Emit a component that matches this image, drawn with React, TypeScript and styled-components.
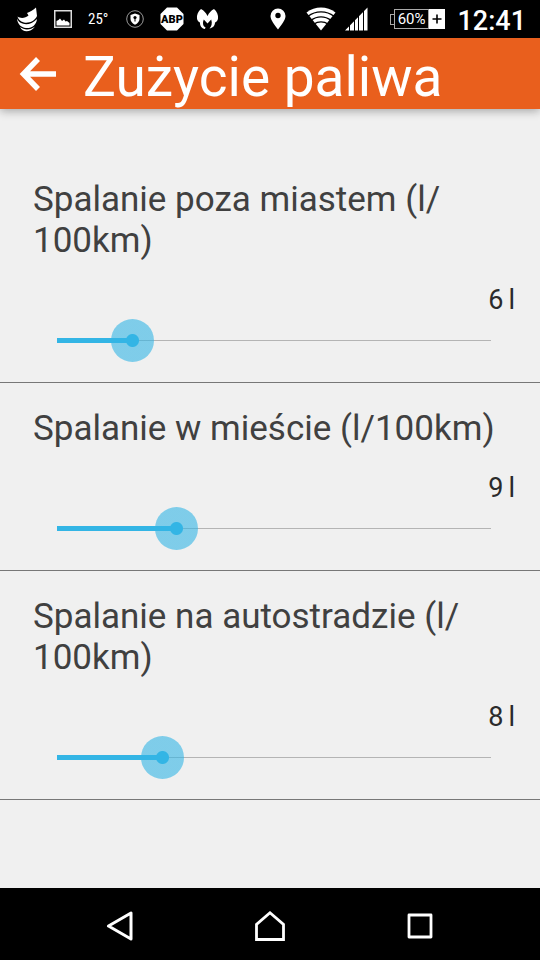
import React, { useId, useState } from "react";
import styled, { createGlobalStyle } from "styled-components";

const GlobalStyle = createGlobalStyle`
  * { box-sizing: border-box; }
  body { margin: 0; background: #f0f0f0; font-family: Roboto, sans-serif; }
`;

const Screen = styled.div`
  display: flex;
  flex-direction: column;
  min-height: 100vh;
`;

const StatusBar = styled.div`
  display: flex;
  align-items: center;
  justify-content: space-between;
  height: 38px;
  padding: 0 14px 0 16px;
  background: #000;
  color: #fff;
`;

const StatusGroup = styled.div<{ $gap: number }>`
  display: flex;
  align-items: center;
  gap: ${(p) => p.$gap}px;
  svg { display: block; }
`;

const Temperature = styled.span`
  min-width: 22px;
  font-family: "Roboto Condensed", Roboto, sans-serif;
  font-size: 15px;
  line-height: 20px;
`;

const Clock = styled.time`
  padding-top: 3px;
  font-size: 27px;
  font-weight: 500;
  line-height: 32px;
`;

const Battery = styled.div`
  display: flex;
  align-items: center;
`;

const BatteryTip = styled.span`
  width: 4px;
  height: 11px;
  border: 1px solid #aaa;
  border-right: 0;
`;

const BatteryLevel = styled.span`
  height: 20px;
  padding: 0 3px;
  border: 1px solid #aaa;
  font-size: 15px;
  line-height: 18px;
`;

const BatteryPlus = styled.span`
  display: grid;
  place-items: center;
  width: 16px;
  height: 20px;
  background: #fff;
`;

const Header = styled.header`
  display: flex;
  align-items: center;
  height: 71px;
  padding: 0 18px;
  gap: 26px;
  background: #e95f1d;
  color: #fff;
  box-shadow: 0 2px 9px rgba(0, 0, 0, 0.32);
`;

const BackButton = styled.button`
  display: flex;
  padding: 0;
  border: 0;
  background: none;
  color: inherit;
`;

const Title = styled.h1`
  margin: 0;
  padding-top: 6px;
  font-size: 55px;
  font-weight: 400;
  line-height: 66px;
`;

const Settings = styled.main`
  flex: 1;
  padding-top: 45px;
`;

const Setting = styled.section`
  padding: 25px 28px 20px 36px;
  border-bottom: 1px solid #777;
`;

const SettingLabel = styled.label`
  display: block;
  margin-left: -3px;
  color: #404040;
  font-size: 35px;
  line-height: 41px;
`;

const SettingValue = styled.output`
  display: flex;
  justify-content: flex-end;
  gap: 5px;
  margin: 23px -3px 3px 0;
  color: #2b2b2b;
  font-size: 27px;
  line-height: 32px;
`;

const Slider = styled.input`
  display: block;
  appearance: none;
  width: 100%;
  height: 43px;
  margin: 0;
  background:
    linear-gradient(#33b5e5, #33b5e5) 21px 19px / calc((100% - 43px) * var(--ratio)) 5px no-repeat,
    linear-gradient(#b4b4b4, #b4b4b4) center 21px / calc(100% - 43px) 1px no-repeat;

  &::-webkit-slider-runnable-track {
    height: 43px;
    background: transparent;
  }

  &::-webkit-slider-thumb {
    appearance: none;
    width: 43px;
    height: 43px;
    border-radius: 50%;
    background: radial-gradient(circle, #33b5e5 6px, rgba(51, 181, 229, 0.6) 7px);
  }
`;

const NavBar = styled.nav`
  display: flex;
  align-items: center;
  justify-content: center;
  gap: 106px;
  height: 72px;
  padding-top: 4px;
  background: #000;
`;

const NavButton = styled.button`
  display: grid;
  place-items: center;
  width: 44px;
  height: 44px;
  padding: 0;
  border: 0;
  background: none;
`;

const MIN = 1;
const MAX = 30;

function FuelSetting({ name, initial }: { name: string; initial: number }) {
  const id = useId();
  const [value, setValue] = useState(initial);
  const ratio = (value - MIN) / (MAX - MIN);
  return (
    <Setting>
      <SettingLabel htmlFor={id}>
        {name} (l/
        <wbr />
        100km)
      </SettingLabel>
      <SettingValue htmlFor={id}>
        <span>{value}</span> <span>l</span>
      </SettingValue>
      <Slider
        id={id}
        type="range"
        min={MIN}
        max={MAX}
        value={value}
        onChange={(e) => setValue(Number(e.target.value))}
        style={{ "--ratio": ratio } as React.CSSProperties}
      />
    </Setting>
  );
}

function SwooshIcon() {
  return (
    <svg width="22" height="25" viewBox="0 0 22 25" fill="#fff">
      <path d="M20 0.500 21 9C19 14 13 16.500 8 15.500 4 14.500 2 12 1.500 9.500 5 12 9.500 11 12.500 8.500L11 6C14 5 17.500 3 20 0.500Z" />
      <path d="M1 11.500C4 18.500 14 19.500 21 12 20.500 18 15.500 21.500 10 21 5 20.500 1.500 17 1 11.500Z" />
      <path d="M4 20C8.500 23.500 14.500 23 19 19.500 16.500 23 13.500 24.300 10.500 24.300 8 24.300 5.500 23 4 20Z" />
    </svg>
  );
}

function PictureIcon() {
  return (
    <svg width="18" height="18" viewBox="0 0 18 18">
      <rect x="0.750" y="0.750" width="16.500" height="16.500" fill="none" stroke="#ddd" strokeWidth="1.500" />
      <path d="M2.500 15.500V11L4.500 10 6 8.500 8 11 10 9.500 11.500 11.500 13 11 15.500 13V15.500Z" fill="#fff" />
    </svg>
  );
}

function ShieldIcon() {
  return (
    <svg width="18" height="18" viewBox="0 0 18 18">
      <circle cx="9" cy="9" r="8.300" fill="none" stroke="#999" />
      <path d="M9 3.500 13.500 5V9C13.500 11.500 11.500 13.500 9 14.800 6.500 13.500 4.500 11.500 4.500 9V5Z" fill="#fff" />
      <circle cx="9" cy="7.500" r="1.600" />
      <path d="M8.500 8H9.500V11.500H8.500Z" />
    </svg>
  );
}

function AdblockIcon() {
  return (
    <svg width="24" height="24" viewBox="0 0 24 24">
      <path d="M7 0.500H17L23.500 7V17L17 23.500H7L0.500 17V7Z" fill="#fff" />
      <text x="12" y="16" textAnchor="middle" fontFamily="Roboto, sans-serif" fontSize="11" fontWeight="900" fill="#000">ABP</text>
    </svg>
  );
}

function ButterflyIcon() {
  return (
    <svg width="23" height="22" viewBox="0 0 23 22" fill="#fff">
      <path d="M5 1C8 2.500 10 5 11.500 8 13 5 15 2.500 18 1 21 3.500 22.500 7 22 10.500 21.700 12.500 20.500 14 19 14.500 19 18 16.500 20 13.500 20.500 15.500 18.500 16.500 15.500 15.200 11.500L11.500 15.500 7.800 11.500C6.500 14.500 6.800 18.500 9.500 19.300L9 21C5.500 20.500 3.800 17.500 4 14.500 2.500 14 1.300 12.500 1 10.500 0.500 7 2 3.500 5 1Z" />
    </svg>
  );
}

function PinIcon() {
  return (
    <svg width="16" height="22" viewBox="0 0 16 22">
      <path d="M8 0.500A7.500 7.500 0 0 1 15.500 8C15.500 12 11.500 17 8 21.500 4.500 17 0.500 12 0.500 8A7.500 7.500 0 0 1 8 0.500ZM8 4.800A2.700 2.700 0 1 0 8 10.200 2.700 2.700 0 1 0 8 4.800Z" fill="#fff" fillRule="evenodd" />
    </svg>
  );
}

function WifiIcon() {
  return (
    <svg width="30" height="24" viewBox="0 0 30 24">
      <path d="M0.500 5.500C9 -1.300 21 -1.300 29.500 5.500L15 23.500Z" fill="#fff" />
      <g fill="none" stroke="#000" strokeWidth="1.300">
        <path d="M2 9.300C9.500 3.300 20.500 3.300 28 9.300" />
        <path d="M5 13.300C11 8.600 19 8.600 25 13.300" />
        <path d="M8 17.100C12 14 18 14 22 17.100" />
      </g>
    </svg>
  );
}

function SignalIcon() {
  return (
    <svg width="23" height="24" viewBox="0 0 23 24">
      <path d="M0 23.500 22.500 0.500V23.500Z" fill="#fff" />
      <path d="M4.500 14V24M9.500 10V24M13.500 5V24M18.500 0V24" stroke="#000" />
    </svg>
  );
}

export default function App() {
  return (
    <>
      <GlobalStyle />
      <Screen>
        <StatusBar>
          <StatusGroup $gap={16}>
            <SwooshIcon />
            <PictureIcon />
            <Temperature>25°</Temperature>
            <ShieldIcon />
            <StatusGroup $gap={12}>
              <AdblockIcon />
              <ButterflyIcon />
            </StatusGroup>
          </StatusGroup>
          <StatusGroup $gap={22}>
            <StatusGroup $gap={20}>
              <PinIcon />
              <StatusGroup $gap={9}>
                <WifiIcon />
                <SignalIcon />
              </StatusGroup>
            </StatusGroup>
            <StatusGroup $gap={12}>
              <Battery>
                <BatteryTip />
                <BatteryLevel>60%</BatteryLevel>
                <BatteryPlus>
                  <svg width="10" height="10" viewBox="0 0 10 10">
                    <path d="M5 0.500V9.500M0.500 5H9.500" stroke="#000" strokeWidth="1.600" />
                  </svg>
                </BatteryPlus>
              </Battery>
              <Clock>12:41</Clock>
            </StatusGroup>
          </StatusGroup>
        </StatusBar>
        <Header>
          <BackButton aria-label="Wstecz">
            <svg width="39" height="36" viewBox="0 0 39 36" fill="none" stroke="#fff" strokeWidth="5.500">
              <path d="M38 18H6M20 3 5.500 18 20 33" />
            </svg>
          </BackButton>
          <Title>Zużycie paliwa</Title>
        </Header>
        <Settings>
          <FuelSetting name="Spalanie poza miastem" initial={6} />
          <FuelSetting name="Spalanie w mieście" initial={9} />
          <FuelSetting name="Spalanie na autostradzie" initial={8} />
        </Settings>
        <NavBar>
          <NavButton aria-label="Wstecz">
            <svg width="28" height="30" viewBox="0 0 28 30" fill="none" stroke="#fff" strokeWidth="3" strokeLinejoin="round">
              <path d="M25 2V28L2.500 15Z" />
            </svg>
          </NavButton>
          <NavButton aria-label="Ekran główny">
            <svg width="30" height="30" viewBox="0 0 30 30" fill="none" stroke="#fff" strokeWidth="2.800">
              <path d="M15 1.800 28.500 13.500V28.500H1.500V13.500Z" />
            </svg>
          </NavButton>
          <NavButton aria-label="Ostatnie aplikacje">
            <svg width="26" height="26" viewBox="0 0 26 26" fill="none" stroke="#fff" strokeWidth="2.800" strokeLinejoin="round">
              <path d="M2 2H24V24H2Z" />
            </svg>
          </NavButton>
        </NavBar>
      </Screen>
    </>
  );
}
